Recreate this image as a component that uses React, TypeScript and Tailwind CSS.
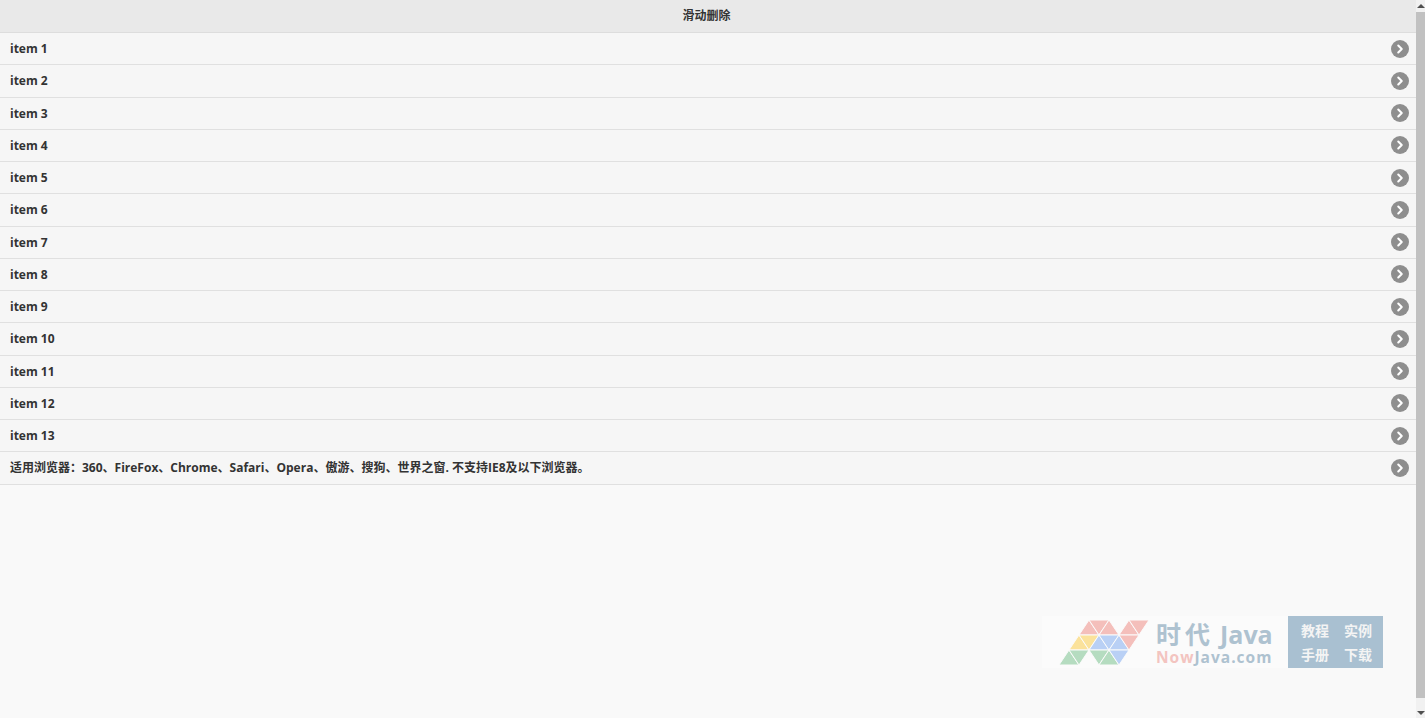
import { ChevronRight } from "lucide-react";

const ITEMS = [
  "item 1",
  "item 2",
  "item 3",
  "item 4",
  "item 5",
  "item 6",
  "item 7",
  "item 8",
  "item 9",
  "item 10",
  "item 11",
  "item 12",
  "item 13",
  "适用浏览器：360、FireFox、Chrome、Safari、Opera、傲游、搜狗、世界之窗. 不支持IE8及以下浏览器。",
];

const RED = "#f4bfbb";
const YELLOW = "#fbe29b";
const BLUE = "#b9d0f5";
const GREEN = "#b5dcc0";

// logo triangles on a 20x15 slanted lattice
const TRIANGLES: [string, string][] = [
  ["20,15 40,15 30,0", RED],
  ["30,0 50,0 40,15", RED],
  ["40,15 60,15 50,0", RED],
  ["60,15 80,15 70,0", RED],
  ["70,0 90,0 80,15", RED],
  ["10,30 30,30 20,15", YELLOW],
  ["20,15 40,15 30,30", YELLOW],
  ["30,30 50,30 40,15", BLUE],
  ["40,15 60,15 50,30", BLUE],
  ["50,30 70,30 60,15", BLUE],
  ["60,15 80,15 70,30", RED],
  ["0,45 20,45 10,30", GREEN],
  ["10,30 30,30 20,45", GREEN],
  ["30,30 50,30 40,45", GREEN],
  ["40,45 60,45 50,30", GREEN],
  ["50,30 70,30 60,45", BLUE],
];

function Row({ label }: { label: string }) {
  return (
    <li className="flex h-[32.25px] items-center justify-between border-b border-[#e0e0e0] bg-[#f6f6f6] pl-[10px] pr-[7px]">
      <span className="mt-[1px] text-[12px] font-bold text-[#333333]">{label}</span>
      <span className="flex h-[18px] w-[18px] items-center justify-center rounded-full bg-[#8e8e8e]">
        <ChevronRight className="h-[14px] w-[14px] text-white" strokeWidth={3.5} />
      </span>
    </li>
  );
}

function Watermark() {
  return (
    <div className="absolute left-[1042px] top-[616px] flex h-[52px] w-[341px] items-center bg-[#fbfbfb]">
      <svg width="90" height="45" viewBox="0 0 90 45" className="ml-[17px] mt-[1px] shrink-0" aria-hidden="true">
        {TRIANGLES.map(([points, fill]) => (
          <polygon key={points} points={points} fill={fill} stroke="#fbfbfb" strokeWidth="1" />
        ))}
      </svg>
      <div className="ml-[7px] flex w-[120px] flex-col whitespace-nowrap">
        <span className="text-[25px] font-bold leading-[30px] text-[#aec2d0]">
          <span className="tracking-[4px]">时代</span>
          <span className="ml-[6px]">Java</span>
        </span>
        <span className="text-[15.5px] font-bold leading-[17px] tracking-[1px] text-[#aec2d0]">
          <span className="text-[#f3c4c0]">Now</span>Java.com
        </span>
      </div>
      <div className="ml-auto grid h-[52px] w-[95px] grid-cols-2 content-center gap-y-[4px] bg-[#a9c0d1] pl-[13px] pr-[11px] pt-[2px] text-[14px] font-bold leading-[20px] text-[#f4f4f4]">
        <span>教程</span>
        <span className="justify-self-end">实例</span>
        <span>手册</span>
        <span className="justify-self-end">下载</span>
      </div>
    </div>
  );
}

function Scrollbar() {
  return (
    <div className="flex h-full w-[9px] shrink-0 flex-col items-center bg-[#f1f1f1]">
      <div className="flex h-[12px] items-center justify-center">
        <div className="h-0 w-0 border-x-[4px] border-b-[4px] border-x-transparent border-b-[#505050]" />
      </div>
      <div className="h-[686px] w-full bg-[#c1c1c1]" />
      <div className="flex flex-1 items-end justify-center pb-[3px]">
        <div className="h-0 w-0 border-x-[4px] border-t-[4px] border-x-transparent border-t-[#505050]" />
      </div>
    </div>
  );
}

export default function App() {
  return (
    <div className="relative flex h-[718px] w-full overflow-hidden bg-[#f9f9f9] font-['Open_Sans','Noto_Sans_CJK_SC',sans-serif]">
      <main className="min-w-0 flex-1">
        <header className="flex h-[33px] items-center justify-center border-b border-[#dddddd] bg-[#e9e9e9] pr-[3px] text-[12px] font-bold text-[#333333]">
          滑动删除
        </header>
        <ul>
          {ITEMS.map((label) => (
            <Row key={label} label={label} />
          ))}
        </ul>
      </main>
      <Scrollbar />
      <Watermark />
    </div>
  );
}
